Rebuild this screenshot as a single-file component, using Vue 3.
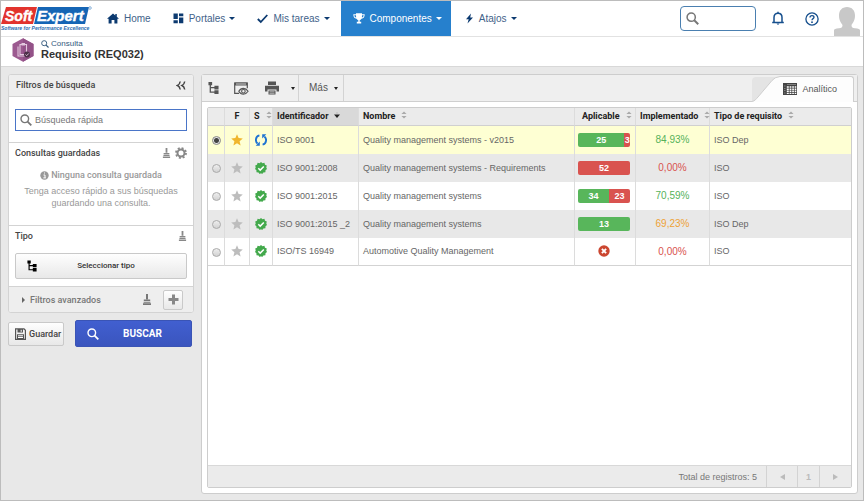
<script setup>
import { ref } from 'vue'

const selected = ref(0)
const term = ref('')
const quick = ref('')

const rows = [
  { id: 'ISO 9001', name: 'Quality management systems - v2015', ok: 25, bad: 3, share: 89, pct: '84,93%', tone: 'good', type: 'ISO Dep', sync: true, fav: true },
  { id: 'ISO 9001:2008', name: 'Quality management systems - Requirements', ok: 0, bad: 52, share: 0, pct: '0,00%', tone: 'low', type: 'ISO' },
  { id: 'ISO 9001:2015', name: 'Quality management systems', ok: 34, bad: 23, share: 60, pct: '70,59%', tone: 'good', type: 'ISO' },
  { id: 'ISO 9001:2015 _2', name: 'Quality management systems', ok: 13, bad: 0, share: 100, pct: '69,23%', tone: 'warn', type: 'ISO Dep' },
  { id: 'ISO/TS 16949', name: 'Automotive Quality Management', ok: 0, bad: 0, share: 0, pct: '0,00%', tone: 'low', type: 'ISO' }
]
</script>

<template>
  <div class="app">
    <svg class="sprite" width="0" height="0" aria-hidden="true">
      <symbol id="i-search" viewBox="0 0 12 12"><circle cx="4.8" cy="4.8" r="3.8" fill="none" stroke="currentColor" stroke-width="1.4" /><path d="M7.6 7.6L11.3 11.3" stroke="currentColor" stroke-width="1.8" /></symbol>
      <symbol id="i-brush" viewBox="0 0 10 12"><path d="M4 0.5h2v5.3H4zM1.8 6h6.4v1.6H1.8zM1.6 8.2h6.8v1H1.6zM1 9.8h8V11.5H1z" fill="currentColor" /></symbol>
      <symbol id="i-tree" viewBox="0 0 12 14"><path d="M2.5 2v9.5H8M2.5 6.5H8" fill="none" stroke="currentColor" stroke-width="1.4" /><path d="M.5 .5h4v3.5h-4zM7 4.500h4.5V8.500H7zM7 9.500h4.5v4H7z" fill="currentColor" /></symbol>
      <symbol id="i-star" viewBox="0 0 12 12"><path d="M6 .3l1.6 3.8 4.2.4-3.2 2.8 1 4.2L6 9.3l-3.6 2.2 1-4.2L.2 4.5l4.2-.4z" fill="currentColor" /></symbol>
      <symbol id="i-badge" viewBox="0 0 12 12"><path d="M6 0l1.500 1.200 1.900-.4.600 1.900 1.800.800L11.300 5.400 12 7l-1.500 1.300-.1 2-2 .2L7.200 12 6 11.200 4.600 12 3.500 10.500l-2-.2-.1-2L0 7l.7-1.600L.2 3.500 2 2.700 2.600.8l1.900.4z" fill="#43a94c" /><path d="M3.300 6.300l1.900 1.800 3.600-3.700" fill="none" stroke="#fff" stroke-width="1.500" /></symbol>
      <symbol id="i-sync" viewBox="0 0 12 12"><path d="M4.400 1.300C.2 2.300.1 7.500 2.600 9.600M7.600 10.700c4.200-1 4.300-6.200 1.800-8.300" fill="none" stroke="#1e73d2" stroke-width="1.900" /><path d="M4.800 7.600V11.700H.7zM7.200 4.400V.3h4.100z" fill="#1e73d2" /></symbol>
      <symbol id="i-sort" viewBox="0 0 6 8"><path d="M3 .5L5.600 3H.4zM3 7.500L5.600 5H.4z" fill="#aaa" /></symbol>
    </svg>

    <header class="top">
      <a class="logo" href="#" aria-label="SoftExpert">
        <svg width="95" height="34" viewBox="0 0 95 34">
          <path d="M5 6h31l-4 17H0z" fill="#e2332d" />
          <path d="M37 6h51l-4 17H33z" fill="#1565b5" />
          <g font-family="Liberation Sans, sans-serif" font-weight="700" font-style="italic">
            <text x="4" y="20" font-size="14" fill="#fff" stroke="#fff" stroke-width=".4">Soft</text>
            <text x="36" y="20" font-size="15" fill="#fff" stroke="#fff" stroke-width=".4">Expert</text>
            <text x="0" y="29" font-size="5" fill="#2b6cb0">Software for Performance Excellence</text>
          </g>
          <circle cx="89" cy="7" r="1.300" fill="none" stroke="#5b94cc" stroke-width=".7" />
        </svg>
      </a>
      <nav class="nav">
        <a href="#"><svg width="12" height="11" viewBox="0 0 12 11"><path d="M6 .4L0 5.800h1.600V10.500h3V7h2.800v3.500h3V5.800H12L9.800 3.800V1H8.300v1.500z" fill="currentColor" /></svg><span>Home</span></a>
        <a href="#"><svg width="11" height="11" viewBox="0 0 11 11"><path d="M.5.5h4.300v5.500H.5zM6 .5h4.300v2.800H6zM.5 7.200h4.300v3H.5zM6 4.500h4.300v5.700H6z" fill="currentColor" /></svg><span>Portales</span><i class="caret"></i></a>
        <a href="#"><svg width="11" height="11" viewBox="0 0 11 11"><path d="M.8 6l3 3L10.300 2" fill="none" stroke="currentColor" stroke-width="1.800" /></svg><span>Mis tareas</span><i class="caret"></i></a>
        <a href="#" class="on"><svg width="12" height="11" viewBox="0 0 12 11"><path d="M3 .3h6v1h2.700c0 2.700-1 4.200-3.200 4.400C8 6.600 7.300 7 6.700 7.200V8.800h1.500v1.700H3.800V8.800h1.500V7.200C4.700 7 4 6.600 3.500 5.700 1.300 5.500.3 4 .3 1.300H3zM1.300 2.200c.1 1.200.7 2.100 1.800 2.400L3 2.200zM10.700 2.200H9l-.1 2.400c1.100-.3 1.700-1.200 1.800-2.400z" fill="currentColor" fill-rule="evenodd" /></svg><span>Componentes</span><i class="caret"></i></a>
        <a href="#"><svg width="9" height="11" viewBox="0 0 9 11"><path d="M6 .5L1 6.200h2.700L2.500 10.500 8 4.600H5.200z" fill="currentColor" /></svg><span>Atajos</span><i class="caret"></i></a>
      </nav>
      <div class="tools">
        <label class="find"><svg width="13" height="13"><use href="#i-search" /></svg><input v-model="term" type="text" aria-label="Buscar" /></label>
        <button class="plain" aria-label="Notificaciones"><svg width="14" height="15" viewBox="0 0 14 15"><path d="M7 .8v1.200M1.200 11.500H12.800M3 11.500V6.500C3 3.800 4.600 2.200 7 2.200s4 1.600 4 4.300v5" fill="none" stroke="currentColor" stroke-width="1.500" /><path d="M5.500 12.500h3L7 14z" fill="currentColor" /></svg></button>
        <button class="plain" aria-label="Ayuda"><svg width="14" height="14" viewBox="0 0 14 14"><circle cx="7" cy="7" r="6.100" fill="none" stroke="currentColor" stroke-width="1.300" /><path d="M5 5.500C5 4.200 5.800 3.600 7 3.600s2 .7 2 1.700C9 6.700 7 6.600 7 8.300" fill="none" stroke="currentColor" stroke-width="1.300" /><circle cx="7" cy="10.200" r=".9" fill="currentColor" /></svg></button>
        <svg class="avatar" width="26" height="29" viewBox="0 0 26 29"><path d="M13 0c5 0 8 3.500 8 8.500 0 5-2 7-3.500 9.500 0 2.500 1 3 3.500 3.200 3.500.3 5 .8 5 2.300v5.500H0v-5.500c0-1.500 1.500-2 5-2.300 2.500-.2 3.500-.7 3.500-3.200C7 15.500 5 13.500 5 8.500 5 3.500 8 0 13 0z" fill="#c8c8c8" /></svg>
      </div>
    </header>

    <div class="title">
      <svg width="22" height="24" viewBox="0 0 22 24"><path d="M11 .3L21.500 6v12L11 23.700.5 18V6z" fill="#9c5a90" /><path d="M11 .3L21.500 6v12L11 23.700z" fill="#935288" /><path d="M8 6.500h6.500v10H8zM6 8.500V18h7" fill="none" stroke="#e3c9df" stroke-width="1.100" /><path d="M9.500 5h3.500v2.500H9.500z" fill="#e3c9df" /><circle cx="15" cy="16.500" r="3" fill="#4e3149" /><path d="M13.500 16.500l1.200 1.200 2-2.200" fill="none" stroke="#e3c9df" stroke-width=".9" /></svg>
      <div>
        <p class="crumb"><svg width="8" height="8"><use href="#i-search" /></svg>Consulta</p>
        <h1>Requisito (REQ032)</h1>
      </div>
    </div>

    <main class="main">
      <aside class="side">
        <div class="card">
          <div class="head"><h2>Filtros de búsqueda</h2><button class="plain" aria-label="Contraer"><svg width="10" height="9" viewBox="0 0 10 9"><path d="M4.200.5C3.900 2.500 3 3.800 1.500 4.500 3 5.200 3.900 6.500 4.200 8.500M8.700.5C8.400 2.500 7.500 3.800 6 4.500c1.500.7 2.400 2 2.700 4" fill="none" stroke="currentColor" stroke-width="1.500" /></svg></button></div>
          <div class="quick"><label><svg width="12" height="12"><use href="#i-search" /></svg><input v-model="quick" type="text" placeholder="Búsqueda rápida" aria-label="Búsqueda rápida" /></label></div>
          <section class="saved">
            <div class="line">
              <h2>Consultas guardadas</h2>
              <button class="plain" aria-label="Limpiar"><svg width="9" height="12"><use href="#i-brush" /></svg></button>
              <button class="plain" aria-label="Configurar"><svg width="12" height="12" viewBox="0 0 12 12"><circle cx="6" cy="6" r="3.500" fill="none" stroke="currentColor" stroke-width="2" /><circle cx="6" cy="6" r="5" fill="none" stroke="currentColor" stroke-width="1.800" stroke-dasharray="2 1.927" /></svg></button>
            </div>
            <p class="none"><svg width="9" height="9" viewBox="0 0 9 9"><circle cx="4.500" cy="4.500" r="4.200" fill="#999" /><path d="M3.500 4h1.500v2.800M3.300 6.900h2.600M4 2h1" stroke="#fff" fill="none" /></svg><b>Ninguna consulta guardada</b></p>
            <p class="hint">Tenga acceso rápido a sus búsquedas guardando una consulta.</p>
          </section>
          <section class="kind">
            <div class="line"><h2>Tipo</h2><button class="plain" aria-label="Limpiar tipo"><svg width="9" height="12"><use href="#i-brush" /></svg></button></div>
            <button class="btn choose"><svg width="10" height="12"><use href="#i-tree" /></svg><span>Seleccionar tipo</span></button>
          </section>
          <div class="more">
            <button class="plain adv"><i></i>Filtros avanzados</button>
            <button class="plain" aria-label="Limpiar filtros"><svg width="10" height="13"><use href="#i-brush" /></svg></button>
            <button class="btn plus" aria-label="Agregar filtro"><svg width="11" height="11" viewBox="0 0 11 11"><path d="M4 .5h3V4h3.500v3H7v3.500H4V7H.5V4H4z" fill="#888" /></svg></button>
          </div>
        </div>
        <div class="acts">
          <button class="btn save"><svg width="11" height="12" viewBox="0 0 11 12"><path d="M.6.8h8.400l1.400 1.500v9H.6z" fill="none" stroke="#555" stroke-width="1.200" /><path d="M2.500 1h5.500v3.500H2.500zM2 6.300h7v5H2z" fill="#555" /><path d="M3 7.800h5M3 9.500h5M6.200 1.800V3.800" stroke="#fff" /></svg>Guardar</button>
          <button class="go"><svg width="12" height="12"><use href="#i-search" /></svg><span>BUSCAR</span></button>
        </div>
      </aside>

      <section class="panel">
        <div class="bar">
          <button class="plain tree" aria-label="Jerarquía"><svg width="11" height="14"><use href="#i-tree" /></svg></button>
          <button class="plain view" aria-label="Visualizar"><svg width="15" height="13" viewBox="0 0 15 13"><path d="M5 11.300H.7V1h12.600v5.300" fill="none" stroke="currentColor" stroke-width="1.200" /><path d="M.5.500h13v3H.5z" fill="currentColor" /><path d="M2 2h10" stroke="#eee" stroke-width=".8" /><path d="M4.800 9.300c2.300-3.900 6.800-3.900 9.300 0-2.500 3.900-7 3.900-9.300 0z" fill="#eee" stroke="currentColor" stroke-width="1.100" /><circle cx="9.400" cy="9.300" r="1.800" fill="none" stroke="currentColor" stroke-width="1.100" /></svg></button>
          <button class="plain print" aria-label="Imprimir"><svg width="14" height="14" viewBox="0 0 14 14"><path d="M3 .5h8V4H3zM0 4.800h14v5.700h-2.500V8.500h-9v2H0zM3.500 9.500h7v4h-7z" fill="currentColor" /><path d="M4.500 10.800h5M4.500 12.300h5" stroke="#eee" stroke-width=".6" /></svg><i class="caret"></i></button>
          <button class="plain mas">Más<i class="caret"></i></button>
          <a class="tab" href="#">
            <svg class="slope" width="28" height="26" viewBox="0 0 28 26"><path d="M0 26V5Q0 1 4 1H28V26z" fill="#e4e4e4" /><path d="M0 26C3 25 4 23 6 21L20 4.500Q23 1 28 .9V26z" fill="#fdfdfd" /><path d="M0 25.500C3 25 4 23 6 21L20 4.500Q23 .9 28 .5" fill="none" stroke="#cfcfcf" /></svg>
            <span class="face"><svg width="14" height="12" viewBox="0 0 14 12"><path d="M0 0h14v12H0z" fill="#444" /><path d="M3.800 3.300h2v1.500h-2zM6.600 3.300h1.800v1.500H6.600zM9.200 3.300h1.700v1.500H9.200zM11.700 3.300h1.600v1.500h-1.600zM3.800 5.600h2v1.300h-2zM6.600 5.600h1.800v1.300H6.600zM9.200 5.600h1.700v1.300H9.200zM11.700 5.600h1.600v1.300h-1.600zM3.800 7.600h2v1.300h-2zM6.600 7.600h1.800v1.300H6.600zM9.200 7.600h1.700v1.300H9.200zM11.700 7.600h1.600v1.300h-1.600zM3.800 9.700h2v1.400h-2zM6.600 9.700h1.800v1.400H6.600zM9.200 9.700h1.700v1.400H9.200zM11.700 9.700h1.600v1.400h-1.600z" fill="#fff" /><path d="M1 3h1.500M1 5.500h1.500M1 7.500h1.500M1 10h1.500M4 1.500h9" stroke="#999" stroke-width=".7" /></svg>Analítico</span>
          </a>
        </div>
        <div class="grid">
          <table>
            <colgroup><col class="c1" /><col class="c2" /><col class="c3" /><col class="c4" /><col class="c5" /><col class="c6" /><col class="c7" /><col class="c8" /></colgroup>
            <thead>
              <tr>
                <th></th>
                <th class="mid">F</th>
                <th class="s">S<svg width="6" height="8"><use href="#i-sort" /></svg></th>
                <th class="sorted">Identificador<svg width="6" height="8" viewBox="0 0 6 8"><path d="M3 7L6 3.500H0z" fill="#222" /><path d="M1.500 2.500h3L3 1z" fill="#bbb" /></svg></th>
                <th>Nombre<svg width="6" height="8"><use href="#i-sort" /></svg></th>
                <th class="ap">Aplicable<svg width="6" height="8"><use href="#i-sort" /></svg></th>
                <th>Implementado<svg width="6" height="8"><use href="#i-sort" /></svg></th>
                <th>Tipo de requisito<svg width="6" height="8"><use href="#i-sort" /></svg></th>
              </tr>
            </thead>
            <tbody>
              <tr v-for="(r, i) in rows" :key="r.id" :class="{ picked: selected === i }">
                <td class="mid"><input v-model="selected" type="radio" name="row" :value="i" :aria-label="r.id" /></td>
                <td class="mid"><svg class="star" :class="{ fav: r.fav }" width="12" height="12"><use href="#i-star" /></svg></td>
                <td class="mid"><svg width="12" height="12"><use :href="r.sync ? '#i-sync' : '#i-badge'" /></svg></td>
                <td>{{ r.id }}</td>
                <td>{{ r.name }}</td>
                <td class="meter-cell">
                  <div v-if="r.ok || r.bad" class="meter"><span v-if="r.ok" class="ok" :style="{ width: r.share + '%' }">{{ r.ok }}</span><span v-if="r.bad" class="bad">{{ r.bad }}</span></div>
                  <svg v-else width="12" height="12" viewBox="0 0 12 12"><circle cx="6" cy="6" r="5.700" fill="#cb4630" /><path d="M3.900 3.900l4.200 4.200M8.100 3.900L3.900 8.100" stroke="#fff" stroke-width="1.900" /></svg>
                </td>
                <td class="pct" :class="r.tone">{{ r.pct }}</td>
                <td>{{ r.type }}</td>
              </tr>
            </tbody>
          </table>
          <footer class="foot">
            <span class="total">Total de registros: 5</span>
            <button class="plain prev" aria-label="Anterior"><i></i></button>
            <button class="plain num">1</button>
            <button class="plain next" aria-label="Siguiente"><i></i></button>
          </footer>
        </div>
      </section>
    </main>
  </div>
</template>

<style>
body { background: #e8e8e8; }
</style>

<style scoped>
* { box-sizing: border-box; }
.app { display: flex; flex-direction: column; min-height: 100vh; border: 1px solid #bcbcbc; background: #e8e8e8; color: #555; font: 9px/12px "Liberation Sans", Arial, sans-serif; }
.sprite { display: block; }
svg { display: block; flex: none; }
p, h1, h2 { margin: 0; }
a { color: inherit; text-decoration: none; }
button, input { font: inherit; color: inherit; margin: 0; }
button { cursor: pointer; }
.plain { display: flex; align-items: center; border: 0; padding: 0; background: none; }
.caret { width: 0; height: 0; border: 3px solid transparent; border-top-color: currentColor; border-bottom: 0; }

.top { display: flex; height: 36px; background: #fff; border-bottom: 1px solid #e2e2e2; }
.logo { width: 95px; }
.nav { display: flex; font-size: 10px; color: #0c3a70; }
.nav a { display: flex; align-items: center; padding: 0 11px; }
.nav span { margin-left: 5px; color: #3f6289; }
.nav .caret { margin-left: 4px; }
.nav .on { background: #2680cd; color: #fff; padding: 0 9px 0 12px; }
.nav .on span { color: #fff; }
.nav a:last-child { padding-left: 14px; }
.tools { display: flex; align-items: center; margin-left: auto; padding-right: 3px; color: #164f8d; }
.find { display: flex; align-items: center; width: 76px; height: 25px; padding-left: 5px; margin-right: 15px; border: 1px solid #4a7fb0; border-radius: 4px; color: #777; }
.find input { flex: 1; min-width: 0; border: 0; outline: 0; background: none; }
.tools .plain { margin-right: 20px; }
.tools .plain + .plain { margin-right: 15px; }
.avatar { align-self: flex-end; }

.title { display: flex; align-items: center; gap: 7px; height: 30px; padding: 0 11px 3px; background: #fff; border-bottom: 1px solid #d8d8d8; }
.crumb { display: flex; align-items: center; gap: 2px; font-size: 8px; line-height: 8px; color: #33597d; }
h1 { font-size: 11px; line-height: 12px; color: #333; }

.main { flex: 1; display: grid; grid-template-columns: 186px 1fr; gap: 7px; padding: 7px 5px 6px 7px; }
.card { border: 1px solid #d3d3d3; border-radius: 3px; background: #fff; overflow: hidden; }
h2, .none, th, .btn, .go { font-family: Roboto, Arial, sans-serif; }
h2 { flex: 1; font-size: 9px; line-height: 12px; font-weight: 500; color: #444; }
.head { display: flex; align-items: center; height: 22px; padding: 0 7px 1px; background: #eee; border-bottom: 1px solid #d3d3d3; color: #444; }
.quick { padding: 12px 6px 11px; }
.quick label { display: flex; align-items: center; gap: 3px; height: 22px; padding: 0 4px; border: 1px solid #4a75c8; color: #777; }
.quick input { flex: 1; min-width: 0; padding: 0; border: 0; outline: 0; background: none; }
.quick input::placeholder { color: #777; opacity: 1; }
.saved { height: 83px; padding: 3px 6px 0; border-top: 1px solid #d3d3d3; color: #999; text-align: center; }
.line { display: flex; align-items: center; gap: 4px; height: 14px; color: #888; text-align: left; }
.none { display: flex; align-items: center; justify-content: center; gap: 2px; margin-top: 9px; }
.none b { font-weight: 500; }
.hint { padding: 0 5px; margin-top: 4px; line-height: 12px; }
.kind { padding: 3px 6px 7px; border-top: 1px solid #d3d3d3; }
.btn { display: flex; align-items: center; border: 1px solid #c9c9c9; border-radius: 2px; background: linear-gradient(#fefefe, #e8e8e8); color: #444; font-size: 8px; line-height: 10px; font-weight: 500; }
.choose { width: 100%; height: 26px; margin-top: 10px; padding: 0 11px; color: #000; }
.choose span { flex: 1; color: #333; text-align: center; }
.more { display: flex; align-items: center; height: 26px; padding: 0 10px 0 13px; background: #eee; border-top: 1px solid #d3d3d3; color: #777; }
.adv { flex: 1; gap: 5px; font-family: Roboto, Arial, sans-serif; font-weight: 500; }
.adv i { border: 3px solid transparent; border-left-color: #666; border-right: 0; }
.plus { justify-content: center; width: 20px; height: 20px; padding: 0; margin-left: 11px; }
.acts { display: flex; align-items: center; gap: 11px; margin-top: 7px; padding-right: 2px; }
.save { width: 56px; height: 24px; gap: 3px; padding: 0 0 0 6px; font-size: 9px; }
.go { flex: 1; display: flex; align-items: center; height: 27px; padding: 0 5px 0 11px; border: 1px solid #3a54b5; border-radius: 2px; background: linear-gradient(#415fd0, #3a55be); color: #fff; font-size: 10px; font-weight: 700; }
.go span { flex: 1; text-align: center; }

.panel { display: flex; flex-direction: column; min-width: 0; border: 1px solid #cdcdcd; border-radius: 3px; background: #fff; }
.bar { display: flex; height: 27px; background: #efefef; border-bottom: 1px solid #cfcfcf; color: #555; }
.tree { padding: 0 7px 0 6px; }
.view { padding: 0 8px; }
.print { gap: 12px; padding: 0 3px 0 8px; border-right: 1px solid #d3d3d3; }
.mas { gap: 6px; padding: 0 5px 0 10px; border-right: 1px solid #d3d3d3; font-size: 10px; }
.bar .caret { border-width: 2px; border-bottom: 0; border-top: 3px solid #222; }
.tab { display: flex; height: 26px; margin: 1px 3px 0 auto; }
.face { display: flex; align-items: center; gap: 5px; height: 26px; padding: 0 16px 2px 3px; background: #fdfdfd; border: solid #cfcfcf; border-width: 1px 1px 0 0; border-radius: 0 3px 0 0; }
.grid { flex: 1; display: flex; flex-direction: column; margin: 5px; border: 1px solid #cdcdcd; border-radius: 2px; }
table { width: 100%; table-layout: fixed; border-collapse: separate; border-spacing: 0; }
.c1 { width: 17px; } .c2 { width: 25px; } .c3 { width: 23px; } .c4 { width: 86px; } .c5 { width: 216px; } .c6 { width: 61px; } .c7 { width: 74px; } .c8 { width: auto; }
th, td { padding: 0 0 1px 4px; border-right: 1px solid #dcdcdc; text-align: left; white-space: nowrap; }
th:last-child, td:last-child { border-right: 0; }
th { height: 18px; background: #ebebeb; border-bottom: 1px solid #d0d0d0; font-weight: 700; color: #222; }
th svg { display: inline-block; margin-left: 6px; }
.sorted { background: #d9d9d9; }
.ap { padding-left: 7px; }
td { height: 28px; color: #666; }
tbody tr:nth-child(even) td { background: #e8e8e8; }
tbody tr.picked td { background: #feffd3; }
tbody tr:last-child td { border-bottom: 1px solid #d3d3d3; }
.mid { padding: 0 0 1px; text-align: center; }
.mid svg { margin: 0 auto; }
input[type="radio"] { appearance: none; display: block; width: 9px; height: 9px; margin: 2px auto 0; border: 1px solid #aaa; border-radius: 50%; background: linear-gradient(#eee, #d2d2d2); }
input[type="radio"]:checked { border-color: #888; background: radial-gradient(#444 0 2px, #e4e4e4 3px); }
.star { color: #bdbdbd; }
.star.fav { color: #f0b62e; }
.meter-cell { padding: 0 5px 1px 3px; }
.meter-cell svg { margin: 0 auto; }
.meter { display: flex; height: 14px; border-radius: 2px; overflow: hidden; color: #fff; font-weight: 700; line-height: 14px; text-align: center; }
.ok { background: #58b65b; }
.bad { flex: 1; background: #d9534f; }
td.pct { padding: 0; text-align: center; font-size: 10px; }
td.good { color: #55b25a; }
td.low { color: #d9534f; }
td.warn { color: #eea236; }
.foot { display: flex; align-items: stretch; height: 22px; margin-top: auto; background: #ebebeb; border-top: 1px solid #d8d8d8; color: #777; }
.total { margin: auto 9px auto auto; }
.foot button { justify-content: center; border-left: 1px solid #d3d3d3; color: #bbb; }
.prev { width: 31px; }
.next { width: 32px; }
.num { width: 22px; font-weight: 700; }
.foot i { border: 3px solid transparent; }
.prev i { border-right: 5px solid #bbb; border-left: 0; }
.next i { border-left: 5px solid #bbb; border-right: 0; }
</style>
